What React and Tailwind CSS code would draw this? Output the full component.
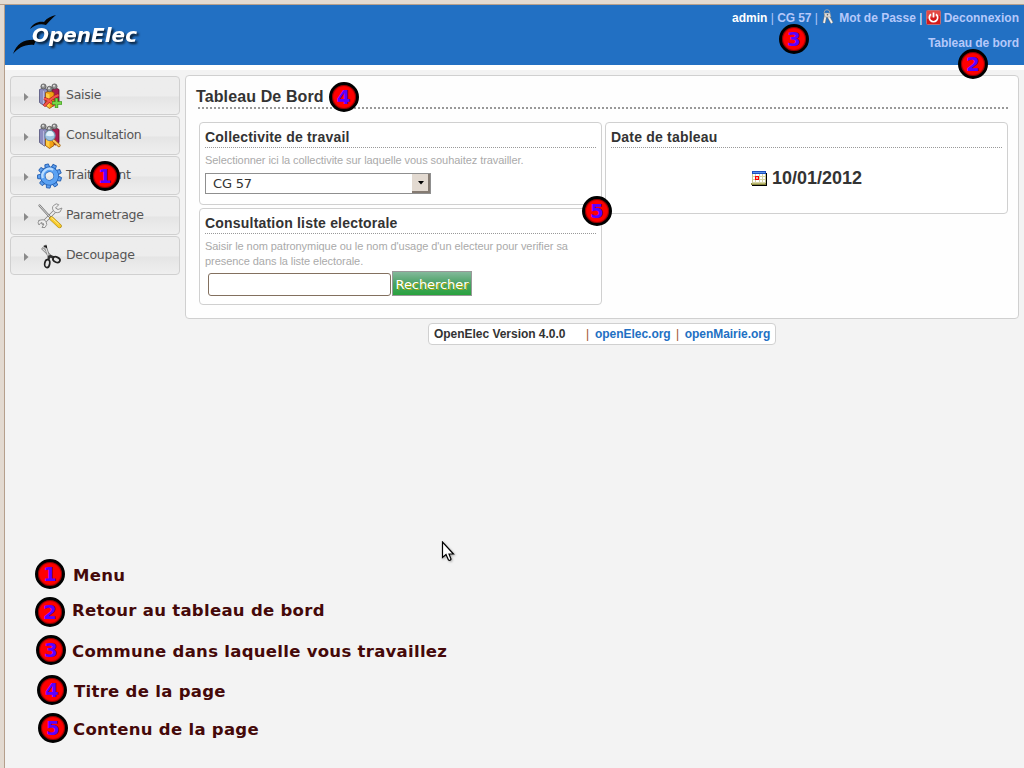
import React from 'react';

function Badge({ n, className = '' }) {
  return (
    <span className={`flex h-[30px] w-[30px] shrink-0 items-center justify-center rounded-full border-[3px] border-black bg-[#ff0000] font-['DejaVu_Sans'] text-[20px] leading-none font-bold text-[#5a00ff] shadow-[inset_0_0_1px_1px_#8a0000] ${className}`}>
      <span>{n}</span>
    </span>
  );
}

function People({ children }) {
  return (
    <svg width="24" height="26" viewBox="0 0 24 26">
      <path d="M1.500 6.500l4-1.500 4 2v14l-3 2-5-3.500z" fill="#8d8dc0" stroke="#505078" strokeWidth=".8" />
      <path d="M5.500 8v14" stroke="#b9b9dc" strokeWidth="1" />
      <path d="M14 6.500l4-1.500 3 1.500v13l-3.500 2.500-3.500-2z" fill="#a91a50" stroke="#5e0b2c" strokeWidth=".8" />
      <path d="M7.500 9.500l4-1.500 4.500 1.500v13l-4.500 3-4-3z" fill="#f2a012" stroke="#8f4f06" strokeWidth=".8" />
      <path d="M8 10l3.500 1.500v13.200L8 22.200z" fill="#ffcd44" />
      <g fill="#8f8f8f" stroke="#4c4c4c" strokeWidth=".7">
        <circle cx="5.500" cy="3.500" r="2.600" /><circle cx="16.500" cy="3.500" r="2.600" /><circle cx="11.500" cy="6" r="2.700" />
      </g>
      <g fill="#e4e4e4"><circle cx="5" cy="2.800" r="1" /><circle cx="16" cy="2.800" r="1" /><circle cx="11" cy="5.300" r="1" /></g>
      {children}
    </svg>
  );
}

const SaisieIcon = () => (
  <People>
    <path d="M6 15.500Q12 17 17 22.500M20.500 12Q13 15 6 23" fill="none" stroke="#a31616" strokeWidth="3.300" />
    <path d="M6 15.500Q12 17 17 22.500M20.500 12Q13 15 6 23" fill="none" stroke="#f1564d" strokeWidth="2" />
    <path d="M18.500 15v10M14 20h10" stroke="#3f9b1e" strokeWidth="3.400" />
    <path d="M18.500 15.600v8.800M14.600 20h8.800" stroke="#76d648" strokeWidth="1.800" />
  </People>
);

const ConsultationIcon = () => (
  <People>
    <path d="M15.500 17.500l5.500 5" stroke="#a5620a" strokeWidth="3.200" strokeLinecap="round" />
    <path d="M15.500 17.500l5.500 5" stroke="#ffc661" strokeWidth="1.800" strokeLinecap="round" />
    <circle cx="12" cy="12.500" r="5.200" fill="#9cc3e2" stroke="#6d8ba8" strokeWidth="1" />
    <path d="M8 12.500q.5-4.500 4-4.500t4 4.500q-4 1.500-8 0z" fill="#e3f2fc" />
  </People>
);

const teeth = [0, 40, 80, 120, 160, 200, 240, 280, 320];
const GearIcon = () => (
  <svg width="26" height="26" viewBox="0 0 26 26">
    <g transform="rotate(-14 12.5 13)">
      <g fill="#5c9fef" stroke="#2560b2" strokeWidth=".9">
        {teeth.map((a) => <path key={a} d="M10 5.500l.7-4.500h3.600l.7 4.500z" transform={`rotate(${a} 12.5 13)`} />)}
      </g>
      <circle cx="12.500" cy="13" r="6.700" fill="none" stroke="#2560b2" strokeWidth="5.600" />
      <circle cx="12.500" cy="13" r="6.700" fill="none" stroke="#5ba2f3" strokeWidth="4.200" />
      <path d="M5.500 13.500a7 7 0 0 1 12-5.500" fill="none" stroke="#b9dcff" strokeWidth="2.200" />
    </g>
  </svg>
);

const ToolsIcon = () => (
  <svg width="26" height="26" viewBox="0 0 26 26" fill="none" strokeLinecap="round">
    <path d="M6 20L19 7" stroke="#808080" strokeWidth="3.600" />
    <path d="M6 20L19 7" stroke="#eee" strokeWidth="2.200" />
    <path d="M19 1q-5 2-3 6t7 2l2-4-4 1.500-2.500-1.500 3-3zM2 17.500q5-2 7 1t-1 6H5l2-3.500-3-1.500-2 2.500q-2-2 0-4.500z" fill="#eee" stroke="#8a8a8a" strokeWidth=".9" />
    <path d="M2.500 2.500L13 14" stroke="#777" strokeWidth="2.200" />
    <path d="M2.500 2.500L13 14" stroke="#ddd" strokeWidth="1" />
    <path d="M14.500 15.500l8 7.500" stroke="#a8830a" strokeWidth="4.400" />
    <path d="M14.500 15.500l8 7.500" stroke="#f8cb2c" strokeWidth="3.200" />
    <path d="M14.500 14.800l7 6.200" stroke="#ffe989" strokeWidth="1" />
  </svg>
);

const ScissorsIcon = () => (
  <svg width="26" height="26" viewBox="0 0 26 26" fill="none">
    <path d="M5 5l10 9.500" stroke="#777" strokeWidth="2.600" />
    <path d="M5.500 5.500l9.500 9" stroke="#ddd" strokeWidth="1.200" />
    <path d="M8 2l4 12.500" stroke="#777" strokeWidth="2.600" />
    <path d="M8.300 3.500l3.300 10" stroke="#ddd" strokeWidth="1.400" />
    <path d="M6 3l4-.5v3z" fill="#222" />
    <path d="M12.500 12.500l-1 4M12.500 13l4.500 1.500" stroke="#333" strokeWidth="2.400" />
    <ellipse cx="10.300" cy="20.500" rx="2.500" ry="4" transform="rotate(10 10 20)" stroke="#222" strokeWidth="1.700" />
    <ellipse cx="19.800" cy="16.800" rx="3.700" ry="2.500" transform="rotate(25 20 16)" stroke="#222" strokeWidth="1.700" />
  </svg>
);

const menu = [
  ['Saisie', SaisieIcon],
  ['Consultation', ConsultationIcon],
  ['Traitement', GearIcon],
  ['Parametrage', ToolsIcon],
  ['Decoupage', ScissorsIcon],
];

function MenuItem({ label, Icon }) {
  return (
    <li className="relative flex h-[39px] items-center rounded-[4px] border border-[#d0d0d0] bg-linear-to-b from-[#ededed] from-50% via-[#e5e5e5] via-55% to-[#efefef] pl-[13px]">
      <svg width="5" height="8" viewBox="0 0 5 8" className="mt-[2px]"><path d="M0 0l4.500 4L0 8z" fill="#8a8a8a" /></svg>
      <span className="ml-2 flex w-[26px] justify-center"><Icon /></span>
      <span className="mb-[2px] ml-[3px] font-['DejaVu_Sans'] text-[12.5px] leading-4 tracking-[-0.27px] text-[#555]">{label}</span>
      {label === 'Traitement' && <Badge n="1" className="absolute top-[4px] left-[79px]" />}
    </li>
  );
}

function Widget({ title, className = '', children }) {
  return (
    <section className={`rounded-[4px] border border-[#d0d0d0] bg-white px-[5px] pt-[5px] ${className}`}>
      <h3 className="h-5 border-b border-dotted border-[#999] text-[14px] leading-[18px] font-bold tracking-[0.2px] text-[#333]">{title}</h3>
      {children}
    </section>
  );
}

const legend = [
  ['1', 'Menu', 'ml-[35px] h-[38px]', 'ml-[8px]', 'top-[2px]'],
  ['2', 'Retour au tableau de bord', 'ml-[35px] h-[38px]', 'ml-[7px]', '-top-px'],
  ['3', 'Commune dans laquelle vous travaillez', 'ml-[36px] h-[40px]', 'ml-[6px]', 'top-[2px]'],
  ['4', 'Titre de la page', 'ml-[37px] h-[38px]', 'ml-[7px]', 'top-[2px]'],
  ['5', 'Contenu de la page', 'ml-[38px] h-[38px]', 'ml-[5px]', 'top-[2px]'],
];

export default function App() {
  return (
    <div className="relative flex h-[768px] w-[1024px] flex-col overflow-hidden bg-[#f3f3f3] font-['Liberation_Sans',sans-serif] text-[#333]">
      <div className="h-[5px] shrink-0 border-b border-[#b59f8c] bg-[#e3dad1]" />
      <div className="flex min-h-0 flex-1">
        <div className="w-[5px] shrink-0 border-r border-[#b59f8c] bg-[#e3dad1]" />
        <div className="flex min-w-0 flex-1 flex-col">
          <header className="flex h-[65px] shrink-0 justify-between border-b-[5px] border-white bg-[#2270c3]">
            <svg width="145" height="60" viewBox="0 0 145 60" className="overflow-visible">
              <path d="M8 49C12 38 20 34 31 35L29 40C20 39 13 43 8 49zM25 24C28 18 34 16 39 17C42 13 46 11 51 10C47 13 44 17 41 20C35 18 30 20 25 24z" fill="#050505" />
              <text x="27" y="37" textLength="105" lengthAdjust="spacingAndGlyphs" fontFamily="DejaVu Sans" fontSize="20" fontWeight="bold" fontStyle="italic" fill="#fff" className="drop-shadow-[2px_2px_1px_rgba(0,0,0,0.75)]">OpenElec</text>
            </svg>
            <div className="flex flex-col items-end pr-[5px] text-[12px] leading-4 font-bold text-[#b5c8fa]">
              <div className="mt-[4px] flex h-[18px] items-center whitespace-pre">
                <span className="text-white">admin</span><span className="font-normal"> | </span><span className="tracking-[-0.1px]">CG 57</span><span className="font-normal"> | </span>
                <svg width="14" height="16" viewBox="0 0 14 16" fill="none" className="mr-[4px] -translate-y-px">
                  <circle cx="6" cy="3.500" r="2.800" stroke="#a5a5a5" />
                  <path d="M5 5L3 14M6 5l5 9" stroke="#777" strokeWidth="3" />
                  <path d="M5 5L3 14M6 5l5 9" stroke="#eee" strokeWidth="1.800" />
                  <path d="M3 4h6l1 4H4z" fill="#ddd" stroke="#888" strokeWidth=".5" />
                  <circle cx="6.500" cy="5.800" r=".8" fill="#555" />
                </svg>
                <span>Mot de Passe</span><span className="font-normal text-white"> | </span>
                <svg width="15" height="15" viewBox="0 0 15 15" className="mr-[3px] -translate-y-px">
                  <rect x=".5" y=".5" width="14" height="14" rx="1" fill="#d51a1a" stroke="#c06b75" />
                  <path d="M1 1h13v5q-6 0-13 3z" fill="#ed6a62" opacity=".6" />
                  <path d="M5 4.200a4.200 4.200 0 1 0 5 0M7.500 2.500v5" fill="none" stroke="#fff" strokeWidth="1.700" />
                </svg>
                <span>Deconnexion</span>
              </div>
              <div className="mt-[8px] tracking-[-0.05px]">Tableau de bord</div>
            </div>
          </header>

          <div className="flex shrink-0 pt-[5px] pl-[5px]">
            <ul className="mt-px flex w-[170px] flex-col gap-px">
              {menu.map(([label, Icon]) => <MenuItem key={label} label={label} Icon={Icon} />)}
            </ul>
            <main className="ml-[5px] h-[244px] w-[834px] rounded-[4px] border border-[#d0d0d0] bg-[#fefefe] px-[10px] pt-[5px]">
              <h2 className="flex h-[28px] items-center text-[16px] font-bold tracking-[0.12px]">
                <span className="mt-[4px]">Tableau De Bord</span>
                <Badge n="4" className="mt-[4px] ml-[5px]" />
              </h2>
              <div className="-mt-[2px] ml-[2px] h-[2px] border-b-2 border-dotted border-[#999]" />
              <div className="mt-[13px] ml-[3px] flex items-start gap-[3px]">
                <div className="flex w-[403px] flex-col gap-[3px]">
                  <Widget title="Collectivite de travail" className="h-[83px]">
                    <p className="mt-[5px] text-[11px] leading-[15px] tracking-[-0.06px] text-[#aaa]">Selectionner ici la collectivite sur laquelle vous souhaitez travailler.</p>
                    <div className="mt-[5px] flex h-[21px] w-[226px] items-center justify-between border border-[#8f8f8f] bg-white pl-[7px] font-['DejaVu_Sans'] text-[13px]">
                      <span className="tracking-[-0.2px]">CG 57</span>
                      <span className="flex h-[19px] w-[18px] items-center justify-center border-r-2 border-b-2 border-[#857b72] bg-[#e3dad1] pl-px">
                        <svg width="6" height="4" viewBox="0 0 6 4"><path d="M0 0h6L3 3.500z" fill="#000" /></svg>
                      </span>
                    </div>
                  </Widget>
                  <Widget title="Consultation liste electorale" className="h-[97px]">
                    <p className="mt-[5px] text-[11px] leading-[15px] tracking-[-0.06px] text-[#aaa]">Saisir le nom patronymique ou le nom d'usage d'un electeur pour verifier sa<br />presence dans la liste electorale.</p>
                    <div className="mt-[2px] ml-[3px] flex items-end gap-px">
                      <div className="h-[23px] w-[183px] rounded-[3px] border border-[#83705f] bg-white" />
                      <button className="flex h-[25px] w-[80px] items-center justify-center border border-[#999] bg-linear-to-b from-[#83b99b] via-[#48a265] to-[#28a33d] pt-[2px] font-['DejaVu_Sans'] text-[13px] leading-[21px] tracking-[-0.08px] whitespace-nowrap text-white [text-shadow:1px_1px_0_#a3ad13]">Rechercher</button>
                    </div>
                  </Widget>
                </div>
                <Widget title="Date de tableau" className="h-[92px] w-[403px]">
                  <div className="mt-[20px] flex items-center justify-center text-[18px] leading-5 font-bold">
                    <svg width="16" height="15" viewBox="0 0 16 15" className="mr-[5px]" shapeRendering="crispEdges">
                      <path d="M2 2h14v13H1v-1h1z" fill="#000" />
                      <path d="M1 1h14v11H1z" fill="#c9c78f" />
                      <path d="M1 0h14v3H1z" fill="#1d50c0" /><path d="M2 1h12v1H2z" fill="#5b93e8" />
                      <path d="M2 3h12v9H2z" fill="#fff" />
                      <path d="M4 3h1v9H4zM8 3h1v9H8zM11 3h1v9h-1zM2 5h12v1H2zM2 8h12v1H2zM2 11h12v1H2z" fill="#d5d3a6" />
                      <path d="M0 12h15v2H0z" fill="#8a893f" /><path d="M1 12h13v1H1z" fill="#bcba72" />
                      <path d="M4 5h4v4H4z" fill="#f00" /><path d="M5 6h2v2H5z" fill="#f3b0a0" />
                    </svg>
                    10/01/2012
                  </div>
                </Widget>
              </div>
            </main>
          </div>

          <footer className="mt-[4px] ml-[423px] flex h-[22px] w-[348px] shrink-0 items-center rounded-[4px] border border-[#d0d0d0] bg-white pl-[5px] text-[12px] font-bold tracking-[-0.03px] whitespace-pre text-[#2270c3]">
            <span className="w-[152px] text-[#333]">OpenElec Version 4.0.0</span><span className="w-[9px] font-normal text-[#a0522d]">|</span><span>openElec.org</span><span className="w-[14px] text-center font-normal text-[#a0522d]">|</span><span>openMairie.org</span>
          </footer>

          <div className="mt-[214px] -ml-[5px] flex flex-col">
            {legend.map(([n, text, row, gap, shift]) => (
              <div key={n} className={`flex shrink-0 items-start ${row}`}>
                <Badge n={n} />
                <span className={`relative font-['DejaVu_Sans'] text-[16.5px] leading-[30px] font-bold tracking-[0.29px] text-[#450909] ${gap} ${shift}`}>{text}</span>
              </div>
            ))}
          </div>
        </div>
      </div>
      <Badge n="3" className="absolute top-[24px] left-[779px]" />
      <Badge n="2" className="absolute top-[49px] left-[958px]" />
      <Badge n="5" className="absolute top-[196px] left-[582px]" />
      <svg className="absolute top-[541px] left-[441px] drop-shadow-[1px_1px_1px_rgba(0,0,0,0.3)]" width="14" height="21" viewBox="0 0 14 21">
        <path d="M1.500 1v15.500l3.500-3 2.500 5.500q2 1 2.500-1l-2-5h4.500z" fill="#fff" stroke="#000" strokeWidth="1.200" />
      </svg>
    </div>
  );
}
